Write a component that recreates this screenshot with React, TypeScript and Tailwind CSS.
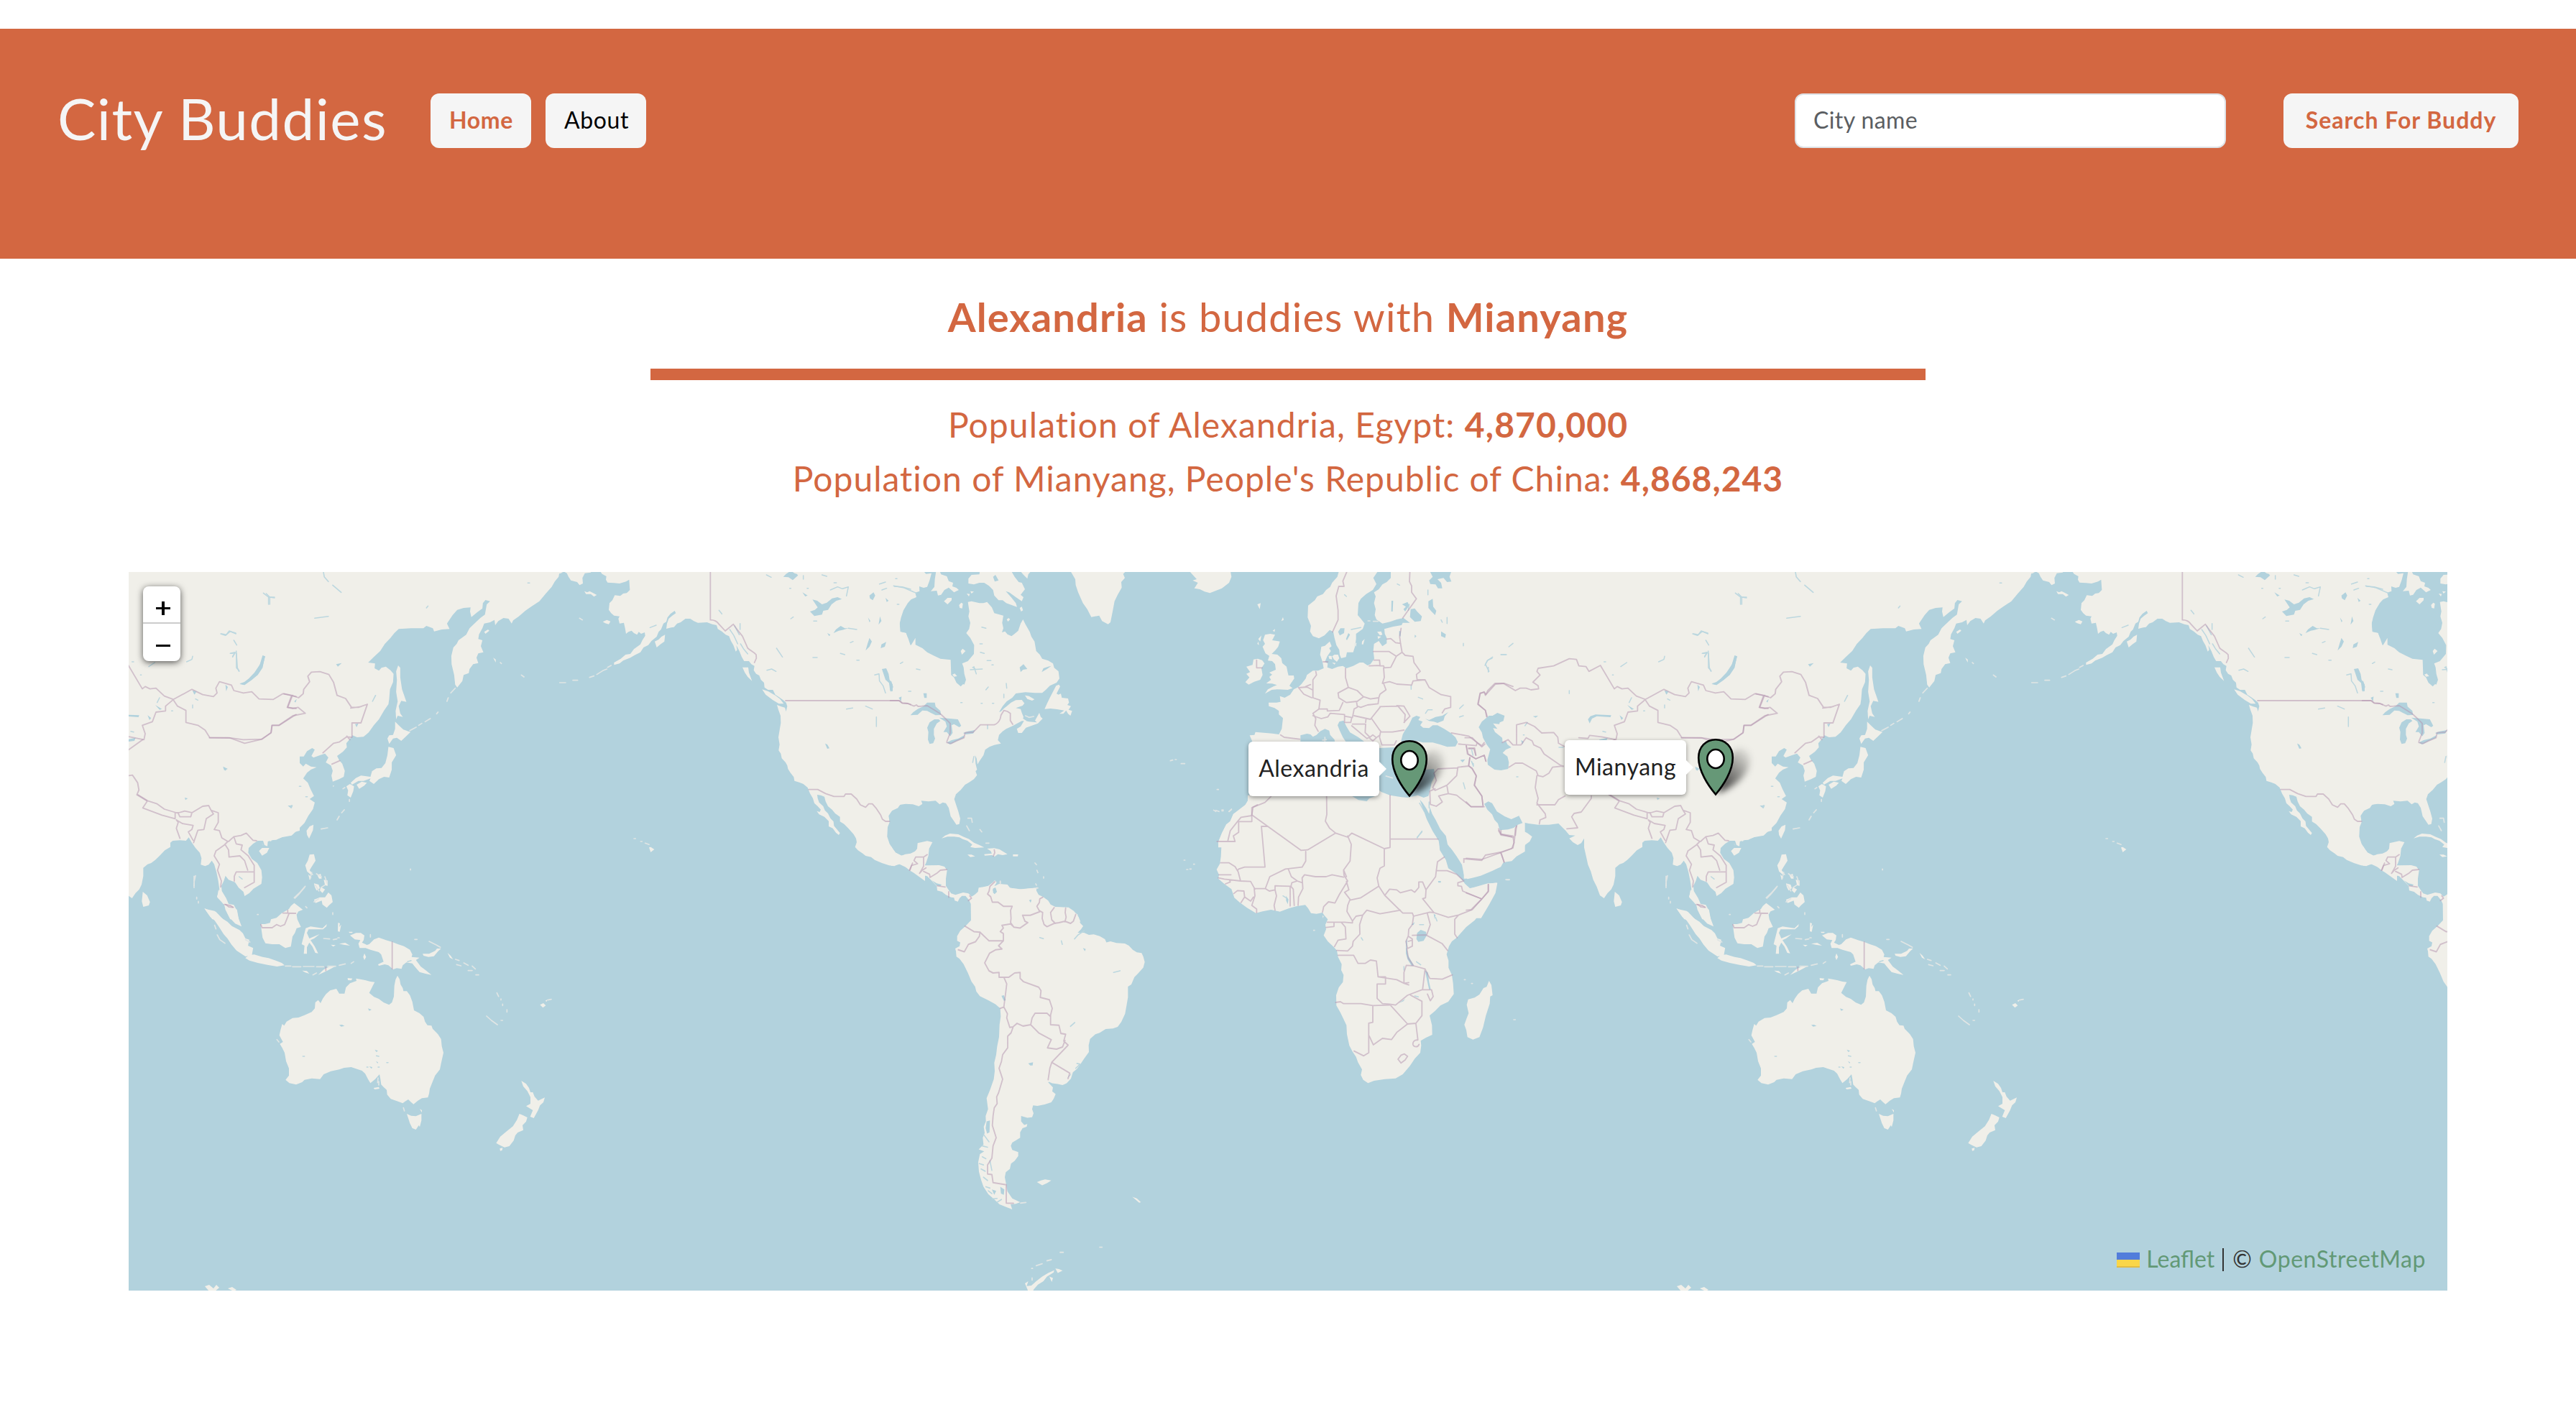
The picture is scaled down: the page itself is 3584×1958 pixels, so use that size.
import React from "react";

/* Every chart sheet holds one region of the world, drawn in its own units. */
type Sheet = {
  place: string;
  land: string[];
  water?: string[];
  islets?: string[];
  streams?: string[];
  borders?: string[];
};

const SHEETS: Sheet[] = [
  {
    // Alaska, western Canada and Mexico
    place: "translate(767 796) scale(0.33333)",
    land: [
      "M200 -9L212 8 230 18 228 32 235 44 262 46 285 48 312 40 325 32 328 75 315 88 300 90 288 100 265 97 255 118 243 130 240 158 250 172 262 182 285 185 280 195 285 215 303 212 308 235 312 258 322 250 335 245 345 255 358 262 365 250 375 258 390 252 392 266 380 285 372 302 345 322 330 342 310 345 290 362 262 378 262 388 285 382 300 370 330 358 348 347 372 335 385 315 405 305 418 288 440 270 448 250 458 240 468 215 480 208 485 190 497 175 515 162 520 172 505 182 490 195 483 215 480 237 500 232 512 230 525 215 540 210 560 195 580 195 595 205 612 212 650 210 672 218 690 222 695 238 712 248 728 262 742 268 750 288 760 305 770 332 776 325 772 305 785 330 795 355 805 372 825 372 835 385 848 392 845 410 855 425 868 432 875 450 888 462 890 482 905 492 925 492 935 512 950 522 968 535 980 545 985 560 980 582 975 566 960 562 942 555 948 575 957 600 958 630 953 660 948 690 953 720 949 745 958 758 962 778 978 795 985 808 988 822 998 838 1012 856 1015 872 1035 878 1052 885 1070 900 1080 925 1092 945 1098 965 1112 978 1125 992 1120 1002 1108 998 1118 1012 1140 1022 1158 1040 1158 1062 1175 1070 1188 1088 1200 1098 1205 1090 1190 1072 1180 1060 1178 1042 1165 1028 1155 1008 1142 995 1135 978 1118 962 1112 945 1110 930 1125 932 1140 938 1145 958 1155 978 1172 992 1185 1008 1205 1022 1205 1042 1222 1052 1240 1070 1262 1095 1272 1112 1275 1128 1268 1148 1280 1162 1300 1175 1312 1185 1335 1190 1350 1202 1380 1215 1410 1225 1432 1228 1455 1217 1475 1225 1500 1247 1560 1290 1560 1145 1500 1175 1478 1178 1462 1184 1438 1172 1425 1155 1412 1135 1402 1105 1404 1065 1412 1045 1408 1018 1425 992 1445 985 1458 970 1480 965 1520 968 1520 275 1500 308 1490 278 1480 255 1455 250 1454 215 1460 190 1470 160 1488 130 1505 110 1505 -9Z",
      "M-30 -9L-30 12 5 25 12 5 25 8 40 5 52 -2 65 5 72 20 82 35 108 42 118 55 132 48 130 25 140 5 165 2 170 -9Z",
      "M138 80L150 85 160 80 172 86 190 96 178 103 165 92 145 92Z",
      "M215 208L232 200 247 206 240 218 225 214Z",
      "M432 290L448 282 460 270 475 262 472 290 455 302 440 315Z",
      "M798 398L822 398 825 420 838 455 820 438 808 420Z",
      "M880 490L905 498 935 515 955 530 970 550 950 550 925 535 895 512Z",
      "M408 1150L415 1148 430 1158 415 1170Z",
    ],
    islets: [
      "M190 428L215 412 232 405M60 462H35M90 452H110M345 1113H352M373 1125H379M392 1132L408 1138M118 193L130 200M235 398L250 390M160 440L178 434",
    ],
    water: [
      "M968 20L980 8 1000 -5 1015 5 1025 8 1030 14 1008 34 990 22Z",
      "M1080 165L1100 158 1112 148 1090 115 1110 120 1130 135 1150 128 1172 110 1195 105 1213 113 1190 120 1170 135 1155 158 1135 162 1130 178 1098 184Z",
      "M1178 255L1188 240 1208 225 1225 235 1240 235 1215 242 1200 245Z",
      "M1380 405L1398 402 1408 425 1412 450 1425 470 1425 498 1416 496 1412 465 1395 450Z",
      "M1328 275L1338 290 1328 312 1312 328 1320 300Z",
      "M1328 98L1345 85 1352 98 1342 118 1330 110Z",
      "M1375 318L1378 302 1398 292 1392 312Z",
      "M1143 716L1152 720 1161 736 1152 738Z",
      "M1048 85L1070 98 1060 102Z",
      "M1450 525L1462 520 1460 540Z",
      "M1152 255L1165 262 1160 268Z",
      "M1322 190L1332 205 1328 210Z",
      "M1372 185L1378 205 1366 220Z",
      "M1395 108L1408 120 1400 125Z",
    ],
    streams: [
      "M1350 430L1368 425 1370 455 1385 475 1395 505",
      "M1165 75L1195 62 1215 70 1240 62 1232 100",
      "M1370 50L1395 42M1432 60L1465 62 1500 72M1380 75L1400 68M995 68H1000M1068 68H1073M1248 295L1260 290M1207 340L1225 345M1092 357H1110M1275 368H1285M1240 235L1275 240M1130 12L1150 18M1180 45H1190M898 12L918 22",
      "M700 160L712 175M788 215V240M940 318L965 355M1232 572L1258 568M1312 560L1340 572M1357 605V645M1052 15V30M1000 195L1010 188M1095 205H1108",
      "M745 240L762 265 778 300M765 225L785 262M790 300L802 320 820 342M412 232L438 222",
      "M900 410L920 405 938 415",
    ],
    borders: [
      "M664 -9V200C680 200 692 206 700 218L726 246 760 218C775 240 785 252 798 268L820 318C830 328 845 334 855 345L856 360 848 378",
      "M978 537H1450L1465 547 1490 549 1500 553",
      "M1075 908H1112L1145 925 1180 937H1222L1228 927H1252L1275 948 1290 972 1312 982 1325 968H1340L1355 985 1375 1015 1382 1032 1395 1041H1412",
      "M1495 1245L1508 1215",
    ],
  },
  {
    // Eastern North America, Greenland and the Caribbean
    place: "translate(1240 796) scale(0.33333)",
    land: [
      "M0 -9H130L145 8 168 5 160 35 150 62 135 66 117 60 118 80 100 86 105 105 82 115 60 135 45 165 38 190 35 215 38 250 62 255 68 280 75 306 100 303 130 318 150 335 175 348 205 362 248 367 250 430 262 440 272 462 290 478 300 468 305 470 312 450 305 425 302 398 296 382 320 372 345 342 346 305 330 275 313 255 325 238 330 212 322 185 326 165 320 125 335 122 368 130 385 130 400 125 420 148 430 172 468 182 463 212 468 235 462 252 475 248 485 260 502 268 515 258 530 245 540 215 550 198 560 218 578 250 585 270 598 290 605 330 620 345 630 362 655 370 675 382 680 400 698 415 702 445 690 462 662 475 645 492 630 505 600 505 560 502 520 507 505 525 482 540 465 560 450 585 458 582 470 570 485 558 500 545 520 535 545 534 556 548 548 558 520 568 540 572 545 588 552 605 550 612 565 622 545 622 520 635 508 642 480 655 465 665 450 680 445 702 458 716 430 722 410 730 392 742 385 765 368 790 360 803 356 778 350 765 352 800 358 825 352 832 358 848 345 865 325 878 308 888 290 910 270 928 263 948 270 970 280 1000 288 1030 284 1052 272 1055 262 1040 248 1020 240 985 228 965 215 962 202 970 185 955 155 958 125 955 130 968 115 978 90 970 60 968 35 972 28 985 0 998Z",
      "M0 1145L15 1170 42 1184 75 1178 95 1172 108 1155 110 1132 150 1123 172 1128 158 1155 155 1185 145 1215 140 1225 150 1225 200 1224 222 1230 233 1245 228 1280 228 1310 240 1328 250 1342 268 1348 300 1338 322 1342 335 1355 345 1350 362 1335 365 1318 385 1315 405 1310 422 1298 432 1287 440 1295 430 1312 450 1302 485 1305 495 1318 530 1325 560 1322 585 1320 608 1318 605 1330 615 1348 632 1355 655 1372 665 1388 685 1398 740 1400 762 1415 782 1440 790 1460H333L332 1385 325 1370 310 1352 295 1352 285 1362 278 1376 265 1372 262 1360 250 1358 228 1348 212 1335 192 1330 190 1312 165 1285 150 1270 115 1262 80 1248 60 1232 35 1220 0 1227Z",
      "M745 -9L768 30 770 55 780 85 800 130 818 155 835 188 868 182 880 205 905 218 915 210 925 160 932 122 945 95 962 65 960 42 975 25 968 8 985 -9Z",
      "M370 -9L368 10 335 12 322 28 322 48 345 52 368 45 388 45 408 58 425 75 430 98 448 118 465 118 480 130 525 146 520 130 500 105 478 80 492 85 520 105 545 122 552 105 540 95 558 72 545 45 532 42 515 20 498 -9Z",
      "M535 -9L550 10 568 28 572 10 588 -9Z",
      "M188 -9L182 30 180 62 165 80 190 78 195 98 208 95 222 75 240 65 262 85 282 75 272 66 255 60 258 45 240 38 232 18 208 10 200 -9Z",
      "M220 122L235 108 252 108 252 118 235 135Z",
      "M283 138L292 128 299 132 296 152 286 150Z",
      "M315 90L328 92 324 102ZM330 80L345 82 335 90Z",
      "M536 150L545 145 550 160 542 165ZM482 198L490 192 496 198 487 207Z",
      "M688 475L700 470 705 478 690 508 698 512 708 508 712 525 738 528 742 545 735 555 750 560 740 575 755 580 748 600 738 592 730 578 718 592 702 592 722 578 692 573 665 570 640 572 650 550 662 525Z",
      "M558 515L575 518 598 532 588 537 568 530Z",
      "M555 620L575 625 608 628 600 620 618 588 624 605 632 612 612 632 585 642 562 650 545 672 530 672 524 655 540 645Z",
      "M210 1112L225 1100 245 1092 280 1095 300 1105 325 1115 345 1130 368 1140 388 1150 350 1152 330 1148 338 1138 318 1122 298 1115 285 1108 262 1105 235 1105Z",
      "M400 1155L430 1153 452 1158 468 1168 485 1178 465 1182 445 1178 432 1188 420 1182 390 1184 388 1178 420 1175 415 1165Z",
      "M318 1180L335 1180 350 1187 330 1190Z",
      "M508 1179H530L528 1187H508Z",
      "M290 330L298 320 310 330 295 345ZM255 428L265 424 275 435 262 437Z",
    ],
    islets: [
      "M315 1060L326 1080M320 1028H335L338 1045M370 1075L378 1085M395 1132H408M1165 788L1175 785M1185 783H1190M1210 800H1225M600 1215L606 1222M608 1245L612 1255M636 1272V1278M603 1302L606 1308M1222 1203H1226M1262 1220H1266M1246 1240H1252M1233 1242H1238M455 1290V1300M560 600L575 607 595 603",
    ],
    water: [
      "M80 598L92 585 110 572 135 560 150 545 182 545 185 562 205 580 208 597 185 598 165 588 150 580 130 578 110 596Z",
      "M150 650L160 628 180 615 198 615 205 622 190 632 178 655 178 680 183 695 175 715 160 718 153 700 155 668Z",
      "M200 608L245 612 278 615 292 642 284 648 262 635 252 640 256 672 246 686 232 668 218 668 232 645 226 625Z",
      "M232 712L252 702 280 695 305 682 303 692 275 705 245 720Z",
      "M300 672L320 665 350 660 342 674 310 678Z",
      "M423 1325L435 1322 440 1335 430 1345Z",
      "M536 398L552 385 568 405 550 408 540 418Z",
      "M628 418L635 402 655 395 668 392 650 405Z",
      "M134 506L148 506 148 526 138 526Z",
      "M-10 455L0 455 8 480 0 500 -5 495Z",
      "M425 20L435 12 448 35 432 40Z",
      "M170 1288L190 1300 210 1305 205 1312 188 1308Z",
      "M575 1370L585 1368 582 1380Z",
    ],
    streams: [
      "M10 58L50 65 105 88M330 408L380 405M345 395L355 425M400 370H416M372 335L388 340M420 388H426M395 492L405 480M480 465L482 485M105 405L120 408M38 382L48 376M370 300H380M378 230L395 235M290 545H296M375 548H380M422 548H428M402 640V655M470 510V525",
      "M345 770L340 795M350 405L340 398M72 498H82M18 28H24M25 135H32",
    ],
    borders: [
      "M-4 537H35L45 547 68 549 95 560 105 555 112 561 128 560 150 558 205 592 220 606 246 632V672L232 708",
      "M232 712L250 716 270 706 304 692 308 671 342 669 372 638H430C442 634 450 625 455 612L458 598 470 578 485 582 497 590V620L507 636",
      "M78 1245L85 1225 110 1218 95 1205 102 1190H135V1228L120 1255M135 1190L150 1180M118 1258L130 1245 145 1235M135 1250L160 1262 162 1275 190 1258 205 1245 232 1242",
      "M192 1310L225 1315M240 1335V1358M328 1352L335 1362 322 1372M430 1160L432 1172 426 1186",
    ],
  },
  {
    // South America and the Antarctic tip
    place: "translate(1300 1210) scale(0.33333 0.37893)",
    land: [
      "M150 105L165 95 182 88 185 72 205 65 225 62 240 50 252 43 258 50 248 62 262 60 280 55 300 57 308 68 340 70 365 73 395 70 420 68 425 78 435 95 455 103 470 112 482 128 500 138 530 140 552 140 575 152 598 165 600 182 610 198 621 208 612 220 598 232 625 232 645 240 665 238 690 245 712 256 718 268 735 264 760 270 795 272 812 280 828 295 845 304 865 307 872 320 878 340 872 360 852 380 835 395 822 422 808 430 808 470 802 500 796 530 780 560 765 578 745 584 715 586 690 600 672 605 650 622 644 645 645 670 625 695 612 712 595 732 578 745 570 768 552 785 535 792 515 788 492 785 478 780 475 782 495 800 492 815 506 825 498 842 488 855 460 863 430 868 412 866 408 880 414 895 408 910 388 912 362 905 362 925 375 938 388 935 385 945 368 950 358 965 358 985 345 992 325 1003 319 1015 325 1030 350 1038 350 1052 335 1070 320 1080 315 1100 298 1112 294 1130 300 1158 305 1182 325 1208 358 1222 340 1228 318 1230 325 1248 300 1240 272 1230 248 1210 225 1192 205 1165 195 1140 186 1110 183 1075 190 1045 208 1035 185 1028 205 1010 202 985 210 968 206 945 215 925 214 905 224 880 218 840 232 810 248 770 252 740 250 710 258 680 262 650 270 615 272 570 277 540 275 510 255 495 225 480 190 465 175 448 170 430 155 412 140 380 122 348 105 328 92 320 90 300 87 290 105 282 108 268 95 262 95 245 108 225 130 208 155 185 155 130Z",
      "M378 1520L392 1512 385 1530 405 1528 425 1512 450 1495 475 1482 500 1472 498 1480 470 1495 455 1512 432 1525 415 1542 400 1570H375L390 1545Z",
      "M505 1465L520 1467 535 1473 515 1482ZM480 1495L495 1500 490 1515Z",
      "M428 1148L445 1142 462 1138 488 1142 470 1152 450 1160Z",
      "M826 1202L845 1208 862 1222 855 1224Z",
      "M350 1560L345 1550 355 1555Z",
    ],
    islets: [
      "M470 1437L488 1433M425 1455L450 1448M406 1465H410M525 1406H538M690 1387H700M360 1225L382 1223M425 68H432M408 1500V1508M275 45V50",
    ],
    water: [
      "M245 70L255 66 261 82 252 90 245 85Z",
      "M280 464L290 462 298 480 290 482Z",
      "M392 712L412 708 410 720 400 720Z",
      "M620 288L632 292 628 300Z",
      "M398 112L404 110 402 122Z",
      "M552 768L572 748 568 756Z",
      "M218 925L232 922 230 965 220 970 214 950Z",
      "M275 1165L292 1175 290 1195 278 1190Z",
      "M240 1175L258 1180 250 1195Z",
    ],
    streams: [
      "M595 712L608 715 590 730M748 378L775 372M568 576L586 562M440 250L455 254M530 262L534 275M585 255L600 240 625 225",
      "M207 975L228 1000M200 1055L215 1062M195 1100L212 1108M205 1130L222 1142M215 1165L232 1170M240 1210L262 1208M200 1015L222 1020M188 1080L205 1085M232 1070L240 1105M262 1222L280 1212M225 1180L240 1190",
    ],
    borders: [
      "M252 45L232 62 228 80 222 90 235 100 242 120 265 120 288 135H325L318 150 320 180 318 195 332 212 358 215 390 195 378 190 368 168 400 168 440 155 428 135 438 122 440 108 452 102",
      "M440 152L452 158 450 180 458 202 470 210 500 198 520 195 545 190 568 198 580 190 590 165M500 140L485 158 490 185 505 198M548 142L546 158 550 175 545 192",
      "M330 210L318 200 282 205 288 215 275 228 288 235V262H228L190 230 165 228 128 208M190 230L188 245 172 265 142 275 125 302 100 295M288 262L268 280 282 292 255 295 230 308 210 343 228 372 245 380 270 378V396H290L302 420 298 450 295 470 290 505 275 510",
      "M290 396H310L335 380 358 378V400L372 412 435 432 445 445 442 470 480 478 492 510 485 535V570L520 572 528 602 548 605 540 630 558 645 490 708 482 730 475 772",
      "M290 505L305 530 302 545 315 580 328 578 345 565 370 575 402 570 408 545 420 528H470L485 540M402 570L435 600 488 625 472 655 510 660 535 652 545 628M490 708L565 748 558 768",
      "M328 580L320 600 306 612V655L285 680 280 705 270 730 285 770 268 820 260 835 262 860 250 875 245 905 242 940 258 985 245 1015 240 1060 222 1085V1118L240 1120 245 1150 300 1158V1225L330 1226",
    ],
  },
  {
    // Europe, the Mediterranean and the Middle East
    place: "translate(1660 796) scale(0.33333)",
    land: [
      "M-20 -9L-5 8 15 30 -2 35 20 45 5 68 28 72 48 82 70 88 95 78 120 68 150 45 160 20 155 -9Z",
      "M610 -9L602 20 580 45 572 62 555 75 542 92 518 102 508 118 480 140 478 190 492 225 488 248 500 268 525 277 548 265 570 242 585 250 590 275 598 305 610 325 612 345 618 360 638 355 642 335 668 335 676 310 680 280 680 258 708 238 716 215 700 195 687 180 690 130 700 112 722 92 750 75 765 50 752 25 775 -9Z",
      "M825 -9L825 25 808 42 790 52 775 72 755 85 762 102 755 130 762 155 758 180 765 198 790 215 822 208 850 198 878 192 905 212 875 212 870 222 835 228 798 238 800 258 808 275 808 298 790 310 775 288 755 300 752 330 756 362 740 385 728 390 710 378 695 378 668 392 640 402 625 392 605 395 580 405 560 398 562 382 550 375 560 352 575 330 568 318 578 310 570 290 550 308 535 312 530 345 540 375 545 402 522 412 500 412 475 430 470 445 452 468 440 480 420 490 405 512 382 525 362 518 365 542 348 545 315 545 316 560 340 568 358 580 358 595 375 610 370 655 358 678 330 674 260 668 256 680 236 682 248 710 248 925 228 937 228 958 218 972 200 990 168 1010 152 1048 135 1062 120 1090 105 1128 105 1150H1335V-9Z",
      "M300 262L322 258 342 262 330 285 362 290 355 312 345 325 328 342 352 345 368 360 372 380 390 395 395 420 398 432 420 432 422 445 408 465 402 475 415 485 395 492 352 490 328 492 300 508 312 490 335 478 350 472 330 466 305 465 325 450 318 438 330 428 318 420 345 408 342 385 330 372 312 370 318 350 302 340 290 312 300 300 292 285Z",
      "M252 365L270 362 288 368 298 382 285 402 290 430 280 450 255 458 232 470 218 460 235 440 222 425 238 418 222 395 248 388Z",
      "M272 280L285 265 280 290ZM268 300L272 290 275 305ZM268 135L282 130 278 155ZM368 205L375 188 378 200ZM332 245L342 238 340 250Z",
      "M590 345L605 345 610 360 600 375 588 365 580 352ZM565 350L578 350 580 365 568 362ZM580 378L595 380 590 386Z",
      "M705 290L716 280 710 302 704 302ZM675 300L682 295 680 312Z",
      "M768 250L785 248 790 262 780 265ZM770 268L785 270 772 280Z",
    ],
    water: [
      "M985 -9L1000 20 985 35 990 50 1012 52 1022 68 1040 68 1035 45 1020 30 1045 25 1060 42 1078 40 1070 20 1080 -9Z",
      "M908 155L925 152 935 165 955 185 950 205 925 208 905 188Z",
      "M982 122L1000 112 1002 145 1015 162 1010 180 995 165 982 150Z",
      "M448 715L448 682 475 675 490 678 500 688 515 680 530 665 550 655 568 662 572 680 590 700 592 715Z",
      "M603 640L610 625 628 620 640 645 655 670 690 690 730 720 645 720 625 690 612 662Z",
      "M775 735L840 732 835 770 845 800 860 825 900 838 940 828 1005 822 1010 850 995 880 990 905 982 935 962 942 938 932 895 942 870 940 822 932 785 918 770 905 758 937 735 945 725 957 690 952 665 937 600 900 600 820Z",
      "M868 705L875 678 885 660 900 640 915 608 932 600 948 605 940 618 958 625 948 640 960 650 985 652 1000 640 1020 640 1048 655 1075 672 1095 690 1105 710 1095 728 1060 730 1030 720 1000 712 960 712 930 705 905 712 880 722Z",
      "M968 612L985 618 1012 605 1040 600 1065 585 1050 602 1045 620 1020 630 1005 625 985 622Z",
      "M605 250L615 235 632 235 630 255 612 265ZM638 280L648 255 655 262 642 285Z",
      "M1035 248L1055 260 1052 275 1035 268Z",
      "M872 135L895 125 902 140 885 165 878 155 888 145Z",
      "M828 120L835 120 833 165 827 165Z",
      "M925 262L932 268 925 275Z",
      "M1160 790L1172 800 1170 815Z",
      "M1115 785L1135 782 1125 795Z",
      "M860 247L867 247 866 270 860 265Z",
    ],
    islets: [
      "M550 690V706M805 852L832 860M730 204H738M752 206H772M100 908H106M95 995L108 1000M120 993H126M150 1000L160 992M540 702L556 700",
    ],
    streams: [
      "M940 523L958 530M970 590L980 575 998 575M1112 570L1128 555M1218 390L1228 370 1250 355M1232 398V418M1285 345H1308M1128 298V308M1112 605L1128 600M898 160L902 135M852 50L862 55M632 95L640 102M660 240L700 232M910 475V490M935 1108L955 1085M945 965L965 1000 988 1012M1128 880L1135 905M980 75V95M1060 190V215M985 960V985M1035 200L1040 210",
    ],
    borders: [
      "M645 -9L625 38 630 60H608L597 100 605 160V200L582 250M905 -9L903 40 912 58V85L932 112 875 192M868 235L862 270 866 300 872 335M808 280L825 278 845 295 866 298M752 332H818L848 352 872 335 885 348 918 352 922 378 948 415 932 428 935 450 968 450M755 368H778L780 390 735 392M780 392H795L798 400 825 398 848 352M795 400L798 440 790 465 820 458 850 468 912 472 918 455 968 450 985 482 1035 512 1075 520V565L1050 572 1040 588",
      "M636 402V440L648 482 685 495 710 520 740 530 775 525 780 510 805 492 795 465M648 482L605 505 608 525 640 545 685 540 710 522M775 528L772 550 728 555 700 565 685 560 682 542M512 415L515 430 500 450V525L530 535 525 572H560V580L610 578 625 545M440 483L475 480 498 492M440 483L462 510 495 525M470 478L490 470M525 572L500 590 512 612 508 640 522 665M500 600L535 612 562 605 572 590 632 595V602L665 608 672 572 685 565M672 600L740 615 780 565M632 605V628H658L662 608M745 612L775 655 785 668 832 668 880 660M780 562L855 560 885 595 882 628M850 558L880 560 905 602 880 628M665 635H720L718 670 738 690 725 695 662 642M720 628L722 612M782 668L778 690 788 722 840 722 848 705M738 690L750 680 765 692 750 705 738 695M765 692L780 680M365 680L380 690 445 698M543 375H562M265 368V400H288",
      "M1228 605L1220 578 1190 552 1198 508 1215 500 1222 512 1262 468 1300 465 1335 478M1078 672L1150 685 1185 712 1182 725 1108 718M1185 712L1205 730 1218 718M1140 725L1145 760 1180 780 1215 765 1222 790M1150 738H1172L1180 765M1155 775L1150 810 1105 815 1100 850 1060 890 1010 912 1000 900 1015 870 1005 840 1022 822 1105 818M1150 810L1165 820 1182 850 1175 890 1205 935 1210 975M1060 895L1065 925 1100 932 1160 980H1215M1065 925L1025 935 1040 960 1015 978 990 970 988 915 1010 905M325 937L300 962 250 982 245 1015M1275 1080L1285 1098 1330 1105",
    ],
  },
  {
    // Africa and Arabia
    place: "translate(1660 1120) scale(0.33333)",
    land: [
      "M228 -40L228 -17 218 0 198 15 168 38 155 68 138 82 122 115 105 155 118 175 116 215 112 245 98 270 108 292 105 308 130 330 160 352 172 388 195 408 225 430 262 452 290 445 325 438 362 446 400 432 430 424 468 418 480 432 492 452 515 455 540 450 548 462 562 478 552 500 555 520 545 545 562 570 585 592 600 608 605 635 620 665 618 690 628 710 625 740 608 762 597 795 598 838 615 868 628 895 640 920 642 958 652 1005 665 1030 680 1052 688 1075 705 1105 700 1128 710 1148 730 1162 755 1152 800 1145 845 1142 875 1125 905 1090 925 1060 948 1035 952 1005 950 985 972 972 998 960 997 920 987 880 1010 860 1032 838 1065 822 1088 790 1085 745 1080 710 1066 680 1066 650 1058 625 1068 590 1080 570 1100 555 1140 510 1175 482 1205 445 1235 395 1255 360 1268 325 1245 328 1212 337 1180 345 1155 348 1135 330 1120 310 1095 285 1065 265 1055 230 1030 190 1025 150 1000 110 975 60 945 -15 945 -40Z",
      "M985 5L1010 60 1030 100 1055 130 1062 165 1082 190 1100 215 1122 250 1130 290 1145 310 1165 305 1200 296 1250 275 1285 258 1295 240 1330 235 1350 215 1385 195V0Z",
      "M1235 735L1245 752 1250 795 1240 800 1238 830 1222 880 1210 930 1195 970 1168 980 1145 970 1140 940 1132 918 1142 890 1150 870 1142 835 1148 812 1175 805 1195 792 1212 765 1225 760Z",
      "M540 462L545 465 542 473ZM500 522L508 525Z",
    ],
    water: [
      "M946 -22L958 -8 975 18 985 38 988 10 998 38 1012 62 1032 102 1055 130 1062 165 1082 192 1040 195 1030 185 1025 150 1000 110 975 60Z",
      "M935 535L950 522 972 530 975 545 962 568 940 572 932 560Z",
      "M888 570L894 560 892 600 898 630 912 655 922 672 912 672 895 645 888 620Z",
      "M968 692L980 700 985 740 992 770 985 772 978 740Z",
      "M388 380L398 395 395 415 388 400Z",
      "M910 500L925 490 920 502Z",
      "M1004 455L1012 460 1008 478Z",
      "M858 828L885 810 878 820Z",
      "M1022 318H1034V325H1024Z",
    ],
    islets: [
      "M1308 313H1320M1338 897H1345M1132 730H1136M1162 746H1166M86 22L95 28M120 25H126M150 28L160 18M503 524H507",
    ],
    streams: [
      "M932 655L950 668M925 798L940 802M880 675V690M702 555L708 565M1012 470L1018 485M945 500H962M955 110L935 138M375 380L388 388",
    ],
    borders: [
      "M100 153H175L168 130 190 115V70H245V12L268 0M245 45L200 52 185 70 155 108 145 150M245 42L450 190 478 188 595 118 570 98 552 68 558 40 557 -40M822 -40V178L798 183 662 118 645 135 595 118M645 130L660 165 655 235 628 272 640 300M285 90H310M285 90L300 260H215L190 268 185 275M115 242H150L175 258 188 280 198 318 240 320 258 352M105 305L130 310 198 318M108 292H158M470 195V235L455 260 385 268 320 300 302 348M398 270L410 300 435 318 455 325M302 350H255L258 380 245 420 265 435V450M302 350L318 360 342 355V338L408 340M342 355L348 380 338 420 342 440M405 340V422M408 340L418 352 422 420M438 420L440 385 458 350 455 305 465 292 510 300 555 300 580 292 628 302M408 342L412 325 435 318M135 330L155 322 152 315M170 370L185 358 212 360 215 385 200 408M215 385L240 402 252 385",
      "M628 272L630 295 645 318 610 375 592 410 565 405 545 425 540 448M640 320L650 355 632 365 655 395 645 420 642 445 665 485V493L632 490H560M655 398L700 388 775 340 768 305 780 265 798 255V183M775 340L800 378 820 352 850 355 865 367 910 355 925 365 942 345V322H958L972 355 970 388 958 392 1005 450M972 355L1012 300 1015 275 1060 275 1100 290 1130 318M1015 275L1020 238 1048 218M1130 318L1105 325 1105 338 1120 340 1125 360 1205 393 1232 360V332M1205 393L1165 438 1108 460 1065 470 1005 450 988 448 920 465 915 452 875 452 800 378M865 440L780 455 725 440 708 460 680 465 665 485M708 460L695 500 696 540 668 570 665 590 645 610 600 608M588 490V508L555 512M618 490L635 510 638 560 605 565 590 592M822 143H1022",
      "M605 628H670L688 662 718 662 740 648 765 652 772 718H803V748H768V808L790 830 820 832 845 836 895 795 955 772 995 772 1002 800 990 818 978 790M772 718L850 730 880 745 900 742M900 752L880 745 880 700 890 670 920 672 968 685 958 770M968 685L988 725 1040 728 1082 710M920 465L915 500 900 520 898 548 888 570 895 600 915 590 915 560 900 550M898 570L915 565M915 545L975 543 990 500 978 455M975 545L1040 580 1062 608M1108 460L1092 478V540L1102 555M892 600L898 640 920 672M595 825L615 822 628 830H700L750 838 820 836M750 840V908L733 912V1035L712 1048 672 1028M735 965L752 1002 790 975 828 980 850 950 895 915 825 838M895 915L930 912 955 880V820L908 795M930 915L938 980M938 982C925 980 915 990 918 1002 922 1012 938 1014 943 1000M855 1062L868 1045 882 1040 895 1050 885 1065 868 1078Z",
      "M1130 240V225L1205 232 1220 210 1283 198 1335 180 1342 140 1335 130 1285 122 1275 100M1283 198L1298 238M1342 140L1345 100 1352 82",
    ],
  },
  {
    // Central and South Asia
    place: "translate(2040 796) scale(0.33333)",
    land: [
      "M-10 -9H1275V1080L1255 1085 1240 1098 1212 1102 1195 1110 1165 1118 1142 1125 1140 1145 1128 1140 1122 1122 1100 1122 1080 1135 1062 1152 1060 1172 1075 1198 1098 1215 1115 1245 1118 1275 1115 1302 1082 1322 1065 1340 1045 1353 1040 1335 1020 1318 1005 1295 978 1285 965 1268 958 1290 948 1310 950 1332 968 1362 978 1385 1000 1390 1012 1412 1020 1450H985L965 1410 960 1388 942 1365 930 1355 940 1325 935 1290 928 1255 918 1220 908 1205 895 1222 880 1228 862 1222 865 1195 858 1172 840 1152 825 1130 812 1108 800 1122 775 1120 745 1122 735 1130 735 1148 712 1162 690 1185 672 1202 655 1215 640 1220 622 1235 622 1270 615 1305 605 1325 590 1340 575 1362 558 1350 545 1315 530 1285 520 1250 508 1222 500 1185 492 1150 492 1112 480 1132 465 1140 445 1128 430 1112 455 1100 430 1098 415 1080 400 1065 385 1050 345 1055 300 1055 260 1050 235 1045 220 1030 215 1055 225 1075 255 1090 275 1105 265 1125 245 1140 238 1165 215 1180 200 1195 175 1205 150 1215 142 1232 90 1250 45 1268 0 1280 -10 1280Z",
      "M-10 1320L20 1320 90 1300 130 1298 122 1340 95 1390 62 1445H-10Z",
      "M620 1335L638 1350 650 1378 645 1392 622 1398 616 1375Z",
      "M1105 1165L1118 1152 1148 1152 1138 1172 1118 1184Z",
      "M878 1405L895 1412 925 1418 955 1450H910Z",
    ],
    water: [
      "M75 968L92 958 108 965 128 1000 160 1020 188 1032 220 1018 235 1048 215 1055 198 1068 175 1075 140 1078 132 1050 118 1035 108 1012 88 992Z",
      "M95 600L110 600 130 588 160 600 155 622 140 628 138 635 112 632 130 655 112 652 120 668 150 692 152 712 165 705 172 720 188 732 165 742 152 755 172 770 178 795 175 822 145 828 118 825 90 805 88 785 100 740 85 720 70 692 65 670 52 648 65 625Z",
      "M1120 348L1130 352 1120 400 1100 430 1075 450 1045 472 1025 468 1045 460 1060 450 1085 425 1105 398Z",
      "M508 615L518 602 540 595 605 598 602 606 545 602 525 612 515 632Z",
      "M555 700L590 692 585 705 560 708Z",
      "M672 555L700 572 690 575Z",
      "M828 495L845 498 835 512Z",
      "M965 470L975 480 968 498Z",
      "M228 702L240 708 235 720Z",
      "M640 598L655 610 648 618Z",
      "M955 812L975 822 960 828Z",
      "M1225 975L1245 975 1240 988Z",
      "M278 602L300 600 290 608Z",
      "M795 942L808 945 798 952Z",
    ],
    islets: ["M840 1268L835 1290M834 1300V1318M845 1358V1365M852 1375V1382M165 1284H180M1098 1430H1102"],
    streams: [
      "M95 415L80 385 90 368 108 360M145 345H165M178 312L195 298M245 642L255 628M430 495V508M945 258L965 265 985 248 1008 255M985 340L1005 335 995 355M1010 330L1015 400 1022 415M803 375L825 365 828 352M645 395L670 378M1135 90L1150 105 1170 108M1150 105V135M575 375H582M610 430H614M680 545L690 525M840 530L850 535M828 555V568M740 580H745M570 665L582 668M1000 285L1012 305M22 740L28 765M22 790L30 810M238 680H242M210 855H216M1022 1272L1035 1282M1118 1135L1122 1140M1240 975H1244M387 732H405",
    ],
    borders: [
      "M-5 692H25L45 712 65 725 75 712M0 725L8 760 40 780 75 765 82 790M10 735H35L40 765M15 775L10 808 25 822 42 852 33 890 65 935 70 975M85 605L80 578 48 552 58 505 75 502 80 515 90 495 120 465 155 465 205 495 225 485H250L270 492 302 488 300 475 278 460 308 430 295 415 300 402 365 392 430 362 460 365 470 392 500 395 512 415 560 390 618 488 630 478 650 488 675 485 710 518 748 532 825 490 870 512 915 520 930 505 925 485 940 458 990 472 1000 495 1040 505 1075 500 1105 530 1165 532 1205 508 1260 520",
      "M748 532L715 560V580L675 585 660 625 618 640 630 675 625 700 565 688 515 682 508 695 470 692M748 535L765 560 800 578V628L850 640 880 660 900 692 980 692 1040 700 1115 698 1155 672 1160 640 1190 640 1260 595M1245 515L1225 565 1260 570M210 722V638L250 628 285 645 315 672 365 670 382 690 385 715 412 730M150 712L175 700 195 722H228L250 692 275 705 282 722 310 735 325 760 390 805 405 812M178 815L205 798 235 798 292 830 300 850 320 855 345 840 360 815 405 810M295 850L288 900 300 945 295 965 330 1010 332 1025 308 1035 305 1052M295 972H370L385 950 412 935M600 930L640 955 680 968 710 990 760 1005H770M640 955L620 985 700 1015 755 1030V1005M522 935V945L480 1002 450 1008 440 1022 465 1068 420 1072M770 1005L795 998 825 1005 820 1022H775L768 1008M825 1005L870 978 895 975 905 995 935 1005V1045L918 1075 940 1080 950 1110 975 1125M905 995L915 1010 885 1030 875 1075 850 1078 832 1130M760 1035L768 1045 760 1070 775 1112M760 1035L785 1050 830 1058 825 1075 810 1085 830 1120M975 1125L960 1140 925 1165 918 1185 940 1220 932 1245 948 1290 945 1315M965 1140L978 1160 980 1190 1025 1185 1045 1205 1058 1245M978 1125L1000 1105 1030 1100 1052 1090 1080 1120 1095 1122M1000 1105L1010 1135 1035 1140 1030 1160 1060 1185 1085 1225V1252H1010L1002 1270 1002 1290M1085 1252L1085 1295 1045 1318M960 1388L985 1392 998 1400M145 1078L145 1095 195 1108 200 1130 190 1155 65 1200 0 1195M145 1170L158 1212M210 1060L205 1100M0 1340L65 1365 92 1335V1305M65 1365L20 1410 0 1412M0 960L20 980H70",
    ],
  },
  {
    // East Asia, Kamchatka and Japan
    place: "translate(2227 796) scale(0.35714 0.33333)",
    land: [
      "M-5 -9H1680L1675 20 1660 40 1648 62 1625 90 1600 122 1568 145 1545 162 1520 185 1498 202 1492 215 1480 195 1460 192 1440 205 1428 222 1425 200 1408 210 1385 215 1378 235 1365 260 1362 280 1378 285 1372 310 1382 335 1362 340 1355 358 1362 380 1342 385 1328 405 1325 422 1305 430 1300 455 1280 482 1272 470 1268 430 1258 385 1257 350 1265 315 1278 300 1285 285 1315 262 1328 235 1350 212 1370 192 1388 178 1395 135 1408 122 1390 117 1380 130 1378 152 1358 168 1335 188 1330 165 1332 148 1305 150 1280 158 1262 180 1240 215 1250 238 1220 240 1190 248 1185 235 1160 225 1148 235 1100 235 1052 238 1035 255 1020 275 998 300 980 330 955 355 933 378 960 382 958 402 975 412 985 400 1002 395 1020 410 1032 425 1030 460 1018 490 1015 530 1012 552 995 578 975 615 955 640 935 670 915 688 890 690 872 682 860 700 848 715 850 732 835 750 812 768 820 785 832 800 842 830 838 855 820 865 795 875 790 850 795 830 788 808 768 795 778 775 765 758 745 765 720 775 712 768 725 742 715 735 695 748 682 770 658 770 655 785 680 812 690 800 710 812 732 815 710 825 695 838 680 862 698 880 708 905 722 935 705 948 725 962 718 990 700 1018 685 1048 660 1075 635 1100 595 1108 575 1118 555 1120V1125L500 1100 0 1050Z",
      "M1042 415L1050 390 1058 400 1058 440 1065 490 1082 542 1062 538 1052 560 1058 590 1068 605 1048 600 1042 615 1040 580 1048 540 1042 500 1045 450Z",
      "M1038 625L1052 640 1070 658 1098 668 1082 685 1062 705 1045 692 1030 695 1015 718 1008 695 1015 682 1030 680 1038 655Z",
      "M1012 730L1032 735 1042 765 1025 795 1025 825 1015 858 995 855 975 865 955 885 938 872 942 862 915 872 895 872 870 888 865 880 885 860 905 850 942 855 948 832 965 820 985 818 1000 798 1008 765Z",
      "M848 895L862 885 878 895 875 915 865 942 852 932 855 912Z",
      "M888 888L908 875 928 880 918 892 898 905Z",
      "M693 1080L705 1062 720 1055 718 1078 703 1113 695 1098Z",
      "M705 1180L722 1178 728 1205 712 1232 705 1245 720 1265 708 1262 695 1250 688 1225 698 1205Z",
      "M735 1265L748 1260 752 1280 742 1280ZM760 1285L775 1288 775 1310 765 1308ZM722 1300L740 1305 745 1320 732 1330 725 1315ZM748 1315L765 1325 755 1340 745 1330ZM700 1262L712 1275 705 1285Z",
      "M722 1368L745 1358 765 1358 778 1338 790 1350 795 1378 780 1392 772 1402 755 1388 752 1372 728 1382Z",
      "M350 1325L360 1352 375 1370 382 1388 405 1395 422 1410 428 1445 440 1480 415 1468 395 1445 385 1425 380 1400 362 1378 345 1358Z",
      "M295 1405L312 1410 335 1415 355 1440 385 1460 402 1478 432 1495 445 1508 455 1530 470 1535 465 1560 485 1570 480 1600 455 1605 420 1580 400 1555 385 1530 370 1512 350 1478 335 1455 318 1440Z",
      "M795 893L800 890 798 898Z",
      "M1385 250L1400 240 1405 245 1390 258Z",
      "M1420 358L1430 365 1430 378Z",
    ],
    water: [
      "M882 635L895 632 888 648Z",
      "M525 350L532 352 520 400 500 430 480 450 450 472 432 466 450 460 468 445 490 420 512 385Z",
      "M808 385L830 380 815 395Z",
      "M645 540L655 530 650 545Z",
      "M368 818L382 820 378 830Z",
      "M250 498L262 498 258 510Z",
    ],
    islets: [
      "M1272 485L1255 505M1245 525L1240 540M1205 585L1200 592M1175 612L1155 625M1142 632L1130 640M1120 648L1095 662M645 1360L665 1340 688 1312M840 993L830 1005M820 1020L812 1035M750 1073L775 1068M1530 430L1540 438M1448 378L1452 382M255 1270V1310M1098 1240V1244M335 1475L340 1490M345 1515L355 1535 375 1550M455 1535L472 1545M860 950V958M835 905L842 900",
    ],
    streams: [
      "M758 -5L762 20 778 40M795 55L828 85M525 88L545 105 568 105M545 105V135M362 258L380 262 392 246 418 258M400 340L415 338 405 352M420 340L420 400 430 412M630 980H636M665 895H671M690 938H696M1555 46H1562M1160 150L1166 142M725 193L778 185M950 540L962 515",
    ],
    borders: [
      "M605 508L635 515 662 525 680 508 682 490 705 458 698 435 712 418 745 416 780 428 798 460 812 515 845 528 868 565H895L930 552 905 630H870V690L850 688 820 710 798 715 757 755M865 568L905 562M635 515L618 565 640 570 660 565 688 590 640 600 585 640 558 640 555 670 520 698 452 715 395 693 315 692M850 685L862 700M792 802L822 788",
      "M0 742L55 700M0 850L15 848 35 880 40 910 32 930 70 955M378 1388L390 1398 405 1400",
    ],
  },
  {
    // Indonesia, Australia and New Zealand
    place: "translate(2420 1190) scale(0.33333)",
    land: [
      "M-27 288L-10 288 11 283 15 268 38 262 60 242 90 225 98 212 112 200 128 212 148 228 130 235 122 248 125 268 140 300 122 305 115 325 105 340 98 382 75 388 50 372 20 372 -8 368 -20 345 -25 310Z",
      "M-78 418L-55 415 -20 425 5 430 35 440 60 450 72 460 40 465 0 458 -40 450 -75 440 -92 430Z",
      "M160 305L180 298 230 305 248 288 246 298 232 310 172 310 165 325 175 348 218 330 195 348 180 355 198 382 212 410 200 408 188 382 175 365 165 385 165 412 152 412 155 378 143 372 150 345Z",
      "M340 320H355V325H342ZM345 335L370 325 390 325 405 335 402 355 395 365 415 375 425 372 445 352 465 344 495 355 520 362 545 372 570 380 595 395 605 415 602 425 635 428 620 438 640 465 660 480 685 500 660 495 635 488 615 465 605 452 580 448 565 460 560 475 540 472 525 477 505 460 490 456 465 462 462 456 485 445 475 415 465 405 430 395 410 388 385 388 380 370 388 355 365 352Z",
      "M648 412L675 412 700 400 708 390 725 390 712 402 695 422 672 425 652 420Z",
      "M752 408L765 420 775 435 762 428Z",
      "M300 370L325 366 345 378 318 374ZM265 374L285 376 275 382Z",
      "M212 500L235 478 258 466 288 462 250 482Z",
      "M145 482L165 484 175 495 158 490Z",
      "M335 513L355 515 350 523 336 522ZM405 410L412 425 405 438 400 425Z",
      "M295 282L303 285 300 300 308 290 302 320 294 318Z",
      "M62 705L70 712 80 695 105 680 130 678 155 668 185 655 198 640 200 615 212 605 222 618 232 598 245 580 262 565 288 558 300 578 322 578 328 552 345 535 372 525 370 515 388 518 408 522 430 528 448 530 440 545 425 575 445 592 465 600 485 615 508 625 520 615 528 590 530 545 535 520 543 503 552 518 556 540 565 555 568 568 582 568 595 585 605 612 612 648 635 660 652 675 658 695 668 710 685 712 690 725 712 748 725 768 728 798 735 825 725 870 720 895 700 920 690 945 678 975 675 995 670 1012 645 1015 628 1025 610 1040 598 1030 588 1020 575 1028 565 1036 545 1028 515 1018 500 1000 498 980 485 968 475 958 472 935 468 915 450 935 430 952 420 935 408 912 395 900 370 892 350 885 320 888 300 895 265 902 235 915 220 935 185 932 155 938 145 948 120 958 92 952 76 938 90 920 90 890 78 860 72 825 62 805 52 788 65 780 50 752 55 730Z",
      "M582 1080L600 1088 620 1090 643 1080 643 1108 636 1135 632 1128 620 1146 605 1140 595 1120Z",
      "M1060 942L1080 955 1092 972 1098 990 1108 990 1115 1008 1130 1025 1158 1012 1152 1032 1138 1045 1130 1065 1112 1098 1097 1092 1108 1065 1080 1048 1098 1038 1098 1010 1085 985 1068 965Z",
      "M1052 1080L1065 1085 1085 1095 1080 1112 1065 1128 1068 1148 1045 1158 1035 1170 1028 1192 1010 1215 990 1220 968 1210 955 1202 972 1175 1000 1152 1025 1132 1042 1105Z",
      "M970 1225L982 1222 980 1232 972 1235Z",
      "M1138 625L1152 618 1162 628 1150 637ZM1160 608L1170 602 1165 612Z",
      "M443 972L465 968 468 975 448 978Z",
      "M636 1060L645 1065 645 1075Z",
    ],
    water: [
      "M300 709L312 708 322 713 308 716Z",
      "M448 812L462 817 455 822ZM425 882L438 885 435 892ZM453 860L462 865 460 870ZM420 640L435 645 425 650Z",
    ],
    islets: [
      "M75 463H98M105 466H140M150 465H195M205 466H235M252 464H285M300 460L325 454M350 452L360 445M785 435L800 440M790 457L808 462M820 450L838 460M838 482H855M855 463L868 475M870 500H882M675 360L705 375 722 385M915 672L935 690 960 708M958 575L965 590M975 600V605M982 622V628M1000 645V655M1170 605L1185 602M185 72L178 100M205 78L225 90M240 90L250 120M200 125L215 150M225 135L240 125M130 165L155 135M115 180L130 165M235 348L260 350M275 353L290 350M294 345H300M615 352H625M460 950L462 930M465 945V960M430 332V342M40 770L48 780M568 1055L572 1068M160 215L165 220M195 195L215 182M273 240V248M205 492L190 500M975 690H982",
    ],
    streams: ["M415 885H420M462 885H467M455 838L465 840M498 866H504M148 840H155M585 445L600 440"],
    borders: ["M521 362V475M65 242L118 243M90 245L72 290 55 297 38 290 20 303H-22L-27 290M85 230V242M244 468V482"],
  },
  {
    // Antarctic fringe
    place: "translate(2227 796) scale(1)",
    land: [
      "M106 994L112 992 118 997 122 992 126 996 120 1001H112ZM138 997L144 995 150 999 146 1001Z",
    ],
  },
];

function World({ dx }: { dx: number }) {
  return (
    <g transform={`translate(${dx} 0)`}>
      {SHEETS.map((s, i) => (
        <g key={i} transform={s.place}>
          <path d={s.land.join("")} fill="#f0efe9" />
        </g>
      ))}
      {SHEETS.map((s, i) => (
        <g key={i} transform={s.place} strokeLinejoin="round" strokeLinecap="round">
          {s.water && <path d={s.water.join("")} fill="#b2d2dd" />}
          {s.islets && (
            <path d={s.islets.join("")} fill="none" stroke="#e0e5e4" strokeWidth={5} />
          )}
          {s.streams && (
            <path d={s.streams.join("")} fill="none" stroke="#bcd7df" strokeWidth={4.5} />
          )}
          {s.borders && (
            <path
              d={s.borders.join("")}
              fill="none"
              stroke="#b595b0"
              strokeOpacity={0.52}
              strokeWidth={5.4}
            />
          )}
        </g>
      ))}
    </g>
  );
}

function WorldMap() {
  return (
    <svg viewBox="179 796 3226 1000" className="block h-[1000px] w-[3226px]">
      <World dx={-2048} />
      <World dx={0} />
      <World dx={2048} />
    </svg>
  );
}

function Pin() {
  return (
    <svg viewBox="0 0 90 84" className="block h-[84px] w-[90px] overflow-visible">
      <defs>
        <filter id="soft" x="-50%" y="-50%" width="200%" height="200%">
          <feGaussianBlur stdDeviation="5" />
        </filter>
        <linearGradient id="shade" x1="0" y1="1" x2="0.7" y2="0">
          <stop offset="0" stopColor="#000" stopOpacity="0.85" />
          <stop offset="1" stopColor="#000" stopOpacity="0.1" />
        </linearGradient>
      </defs>
      <path
        d="M26 76C34 62 38 22 56 14 72 12 78 28 68 46 58 62 40 72 26 76Z"
        fill="url(#shade)"
        filter="url(#soft)"
      />
      <path
        d="M25 1.2C11.500 1.200 1.200 11.500 1.200 26.500 1.200 44.500 14 64.500 25 77.500 36 64.500 48.800 44.500 48.800 26.500 48.800 11.500 38.500 1.200 25 1.200Z"
        fill="#669877"
        stroke="#000"
        strokeWidth="2.6"
      />
      <ellipse cx="25" cy="28" rx="11.700" ry="13" fill="#fff" stroke="#000" strokeWidth="2.600" />
    </svg>
  );
}

function Label({ text, className }: { text: string; className: string }) {
  return (
    <div
      className={`absolute flex h-[76px] items-center justify-center rounded-md bg-white pb-[2px] text-[32px] tracking-[0.5px] text-[#222] shadow-[0_2px_6px_rgba(0,0,0,0.4)] ${className}`}
    >
      {text}
      <span className="absolute top-[28px] left-full h-0 w-0 border-y-[10px] border-l-[10px] border-y-transparent border-l-white" />
    </div>
  );
}

export default function App() {
  return (
    <div className="flex h-[1958px] w-[3584px] flex-col overflow-hidden bg-white pt-10 font-[Lato,sans-serif] text-[32px] leading-[48px]">
      <header className="flex h-80 shrink-0 items-start bg-[#d36741] px-20 pt-[90px]">
        <div className="flex h-[76px] items-center">
          <h1 className="w-[519px] pb-[9px] text-[80px] leading-[76px] tracking-[1.4px] whitespace-nowrap text-[#f5f5f5]">
            City Buddies
          </h1>
          <nav className="flex gap-5">
            <button className="h-[76px] w-[140px] rounded-xl bg-[#f5f5f5] pb-[2px] pl-[1px] font-bold tracking-[0.6px] text-[#d36741]">
              Home
            </button>
            <button className="h-[76px] w-[140px] rounded-xl bg-[#f5f5f5] pb-[2px] pl-[2px] tracking-[0.6px] text-black">
              About
            </button>
          </nav>
        </div>
        <form className="ml-auto flex gap-20">
          <input
            placeholder="City name"
            className="h-[76px] w-[600px] rounded-xl border-2 border-[#dee2e6] bg-white px-6 pb-[3px] tracking-[0.4px] placeholder:text-[#5b5e62]"
          />
          <button
            type="button"
            className="h-[76px] w-[327px] rounded-xl bg-[#f5f5f5] pb-[2px] font-bold tracking-[1px] text-[#d36741]"
          >
            Search For Buddy
          </button>
        </form>
      </header>

      <main className="flex flex-col items-center text-[#d36741]">
        <h2 className="mt-[47px] text-[56px] leading-[68px] tracking-[1.15px]">
          <b>Alexandria</b> is buddies with <b>Mianyang</b>
        </h2>
        <div className="mt-[38px] h-4 w-[1774px] bg-[#d36741]" />
        <p className="mt-6 text-[48px] leading-[75px] tracking-[1.1px]">
          Population of Alexandria, Egypt: <b>4,870,000</b>
        </p>
        <p className="text-[48px] leading-[75px] tracking-[1px]">
          Population of Mianyang, People's Republic of China: <b>4,868,243</b>
        </p>

        <section className="relative mt-[93px] h-[1000px] w-[3226px] overflow-hidden bg-[#b2d2dd]">
          <WorldMap />

          <div className="absolute top-5 left-5 flex h-[104px] w-[52px] flex-col overflow-hidden rounded-lg bg-white shadow-[0_2px_10px_rgba(0,0,0,0.65)]">
            <button className="relative h-[52px] border-b-2 border-[#ccc]">
              <span className="absolute top-[29px] left-[18px] h-[3px] w-5 bg-black" />
              <span className="absolute top-[21px] left-[26px] h-[19px] w-[4px] bg-black" />
            </button>
            <button className="relative h-[52px]">
              <span className="absolute top-[29px] left-[18px] h-[3px] w-5 bg-black" />
            </button>
          </div>

          <Label text="Alexandria" className="top-[236px] left-[1558px] w-[182px]" />
          <div className="absolute top-[234px] left-[1757px]">
            <Pin />
          </div>
          <Label text="Mianyang" className="top-[234px] left-[1998px] w-[169px]" />
          <div className="absolute top-[232px] left-[2183px]">
            <Pin />
          </div>

          <div className="absolute right-[30px] bottom-[18px] flex items-center text-[32px] leading-[48px] whitespace-pre text-[#333]">
            <span className="mr-[9px] flex h-[21px] w-8 flex-col">
              <span className="h-[10px] bg-[#527ddb]" />
              <span className="h-[9px] bg-[#fad648]" />
              <span className="h-[2px] bg-[#e0bc45]" />
            </span>
            <span className="pb-[2px] text-[#629976]">Leaflet</span>
            <span className="ml-[11px] h-8 w-[2px] bg-[#333]" />
            <span className="ml-3 pb-[2px]">©</span>
            <span className="ml-[10px] pb-[2px] tracking-[0.55px] text-[#629976]">OpenStreetMap</span>
          </div>
        </section>
      </main>
    </div>
  );
}
